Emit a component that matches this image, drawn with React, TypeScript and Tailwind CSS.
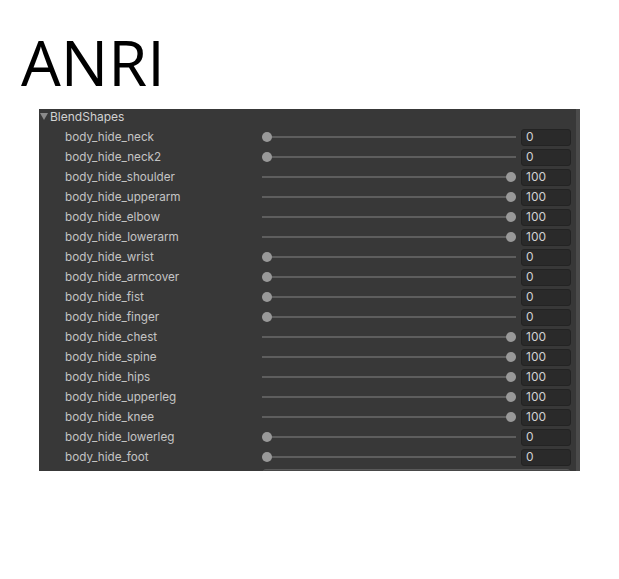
import React from "react";

const rows: [string, number][] = [
  ["body_hide_neck", 0],
  ["body_hide_neck2", 0],
  ["body_hide_shoulder", 100],
  ["body_hide_upperarm", 100],
  ["body_hide_elbow", 100],
  ["body_hide_lowerarm", 100],
  ["body_hide_wrist", 0],
  ["body_hide_armcover", 0],
  ["body_hide_fist", 0],
  ["body_hide_finger", 0],
  ["body_hide_chest", 100],
  ["body_hide_spine", 100],
  ["body_hide_hips", 100],
  ["body_hide_upperleg", 100],
  ["body_hide_knee", 100],
  ["body_hide_lowerleg", 0],
  ["body_hide_foot", 0],
];

function Row({ name, value }: { name: string; value: number }) {
  return (
    <div className="flex h-[20px] items-center">
      <div className="w-[223px] shrink-0 pl-[26px] pt-[2px] text-[11.7px] leading-none text-[#c4c4c4]">{name}</div>
      <div className="relative h-[20px] w-[254px] shrink-0">
        <div className="absolute left-0 right-0 top-[9px] h-[2px] bg-[#5e5e5e]" />
        <div
          className="absolute top-[5px] h-[10px] w-[10px] rounded-full bg-[#999999]"
          style={{ left: value === 100 ? 244 : 0 }}
        />
      </div>
      <div className="ml-[5px] flex h-[17px] w-[50px] shrink-0 items-center rounded-[3px] border border-[#232323] bg-[#2a2a2a] pl-[4px] text-[12px] leading-none text-[#d2d2d2]">
        {value}
      </div>
    </div>
  );
}

export default function App() {
  return (
    <div className="min-h-[579px] bg-white" style={{ fontFamily: "Inter, 'Noto Sans', sans-serif" }}>
      <div className="pt-[26px] pl-[21px]">
        <div
          className="text-[63px] leading-[72px] text-black"
          style={{ fontFamily: "'Open Sans', 'Noto Sans', sans-serif" }}
        >
          ANRI
        </div>
      </div>
      <div className="ml-[39px] mt-[11px] flex h-[362px] w-[541px] overflow-hidden">
        <div className="w-[537px] bg-[#383838]">
          <div className="flex h-[18px] items-center pb-[4px] pt-[1px]">
            <svg width="8" height="7" viewBox="0 0 8 7" className="ml-[1px] mr-[2px]">
              <polygon points="0,0 8,0 4,7" fill="#8a8a8a" />
            </svg>
            <span className="text-[12px] leading-none text-[#d2d2d2]">BlendShapes</span>
          </div>
          {rows.map(([n, v]) => (
            <Row key={n} name={n} value={v} />
          ))}
          <div className="flex h-[20px] items-start pt-[2px]">
            <div className="ml-[224px] h-[17px] w-[307px] rounded-[3px] border-t border-[#5a5a5a] bg-[#474747]" />
          </div>
        </div>
        <div className="w-[4px] bg-[#4b4b4b]" />
      </div>
    </div>
  );
}
